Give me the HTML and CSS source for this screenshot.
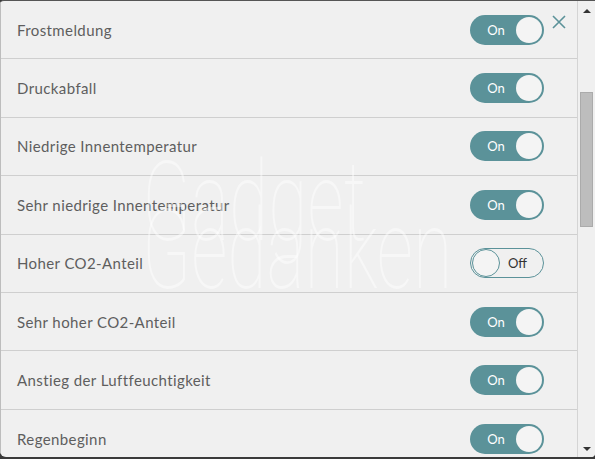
FILE: index.html
```html
<!DOCTYPE html>
<html lang="de">
<head>
    <meta charset="UTF-8">
    <meta name="viewport" content="width=device-width, initial-scale=1.0">
    <title>Benachrichtigungen</title>
    <link rel="stylesheet" href="styles.css">
</head>
<body>
    <div class="window">
        <div class="list">
            <div class="row">
                <span class="label">Frostmeldung</span>
                <div class="toggle on"><span class="state">On</span><span class="knob"></span></div>
            </div>
            <div class="row">
                <span class="label">Druckabfall</span>
                <div class="toggle on"><span class="state">On</span><span class="knob"></span></div>
            </div>
            <div class="row">
                <span class="label">Niedrige Innentemperatur</span>
                <div class="toggle on"><span class="state">On</span><span class="knob"></span></div>
            </div>
            <div class="row">
                <span class="label">Sehr niedrige Innentemperatur</span>
                <div class="toggle on"><span class="state">On</span><span class="knob"></span></div>
            </div>
            <div class="row">
                <span class="label">Hoher CO2-Anteil</span>
                <div class="toggle off"><span class="knob"></span><span class="state">Off</span></div>
            </div>
            <div class="row">
                <span class="label">Sehr hoher CO2-Anteil</span>
                <div class="toggle on"><span class="state">On</span><span class="knob"></span></div>
            </div>
            <div class="row">
                <span class="label">Anstieg der Luftfeuchtigkeit</span>
                <div class="toggle on"><span class="state">On</span><span class="knob"></span></div>
            </div>
            <div class="row last">
                <span class="label">Regenbeginn</span>
                <div class="toggle on"><span class="state">On</span><span class="knob"></span></div>
            </div>

            <!-- close button sits over the first row -->
            <button class="close" aria-label="Schließen">
                <svg width="14" height="14" viewBox="0 0 14 14">
                    <path d="M1 1 L13 13 M13 1 L1 13" stroke="#5b9299" stroke-width="1.6" fill="none"/>
                </svg>
            </button>

            <div class="watermark">Gadget<br>Gedanken</div>
        </div>

        <div class="scrollbar">
            <span class="arrow up"></span>
            <div class="track"><div class="thumb"></div></div>
            <span class="arrow down"></span>
        </div>
    </div>
</body>
</html>
```

FILE: styles.css
```css
body {
    margin: 0;
    background-color: #3a3a3a;
    font-family: Lato, "Open Sans", sans-serif;
}
.window {
    display: flex;
    width: 595px;
    height: 457px;
    background-color: #f0f0f0;
    border-top: 1px solid #555;
    border-radius: 4px 0 4px 6px;
    box-sizing: border-box;
    overflow: hidden;
}
.list {
    position: relative;
    flex: 1;
    border-left: 1px solid #bdbdbd;
    border-right: 1px solid #d4d4d4;
    overflow: hidden;
}
.row {
    display: flex;
    align-items: center;
    justify-content: space-between;
    height: 58.4px;
    padding: 0 33px 0 16px;
    border-bottom: 1px solid #cfcfcf;
    box-sizing: border-box;
}
.row.last {
    border-bottom: none;
}
.label {
    font-size: 15px;
    color: #5e5e5e;
    letter-spacing: 0.4px;
}
.toggle {
    display: flex;
    align-items: center;
    width: 74px;
    height: 30px;
    border-radius: 15px;
    box-sizing: border-box;
    font-size: 13px;
}
.toggle.on {
    background-color: #5b9299;
    color: #fff;
    padding: 0 2px 0 0;
}
.toggle.on .state {
    flex: 1;
    text-align: center;
    padding-left: 6px;
}
.toggle.on .knob {
    width: 26px;
    height: 26px;
    border-radius: 50%;
    background-color: #f4f4f4;
}
.toggle.off {
    border: 1px solid #5b9299;
    color: #333;
}
.toggle.off .knob {
    width: 26px;
    height: 26px;
    margin-left: 1px;
    border-radius: 50%;
    border: 1px solid #5b9299;
    background-color: #f4f4f4;
}
.toggle.off .state {
    flex: 1;
    text-align: center;
    padding-right: 8px;
}
.close {
    position: absolute;
    top: 14px;
    right: 11px;
    padding: 0;
    border: none;
    background: none;
    line-height: 0;
}
.watermark {
    position: absolute;
    left: 141px;
    top: 147px;
    font-family: Roboto, sans-serif;
    font-weight: 100;
    font-size: 112px;
    line-height: 48px;
    padding-top: 30px;
    color: rgba(255, 255, 255, 0.45);
    transform: scaleX(0.64);
    transform-origin: left top;
    pointer-events: none;
}
.scrollbar {
    display: flex;
    flex-direction: column;
    align-items: center;
    width: 17px;
    background-color: #f0f0f0;
}
.track {
    flex: 1;
    width: 100%;
    padding: 79px 2px 0 2px;
    box-sizing: border-box;
}
.thumb {
    height: 135px;
    background-color: #bdbdbd;
    border: 1px solid #ababab;
    box-sizing: border-box;
}
.arrow {
    width: 0;
    height: 0;
    border-left: 4px solid transparent;
    border-right: 4px solid transparent;
}
.arrow.up {
    margin-top: 8px;
    border-bottom: 4px solid #333;
}
.arrow.down {
    margin-bottom: 6px;
    border-top: 4px solid #333;
}
```
